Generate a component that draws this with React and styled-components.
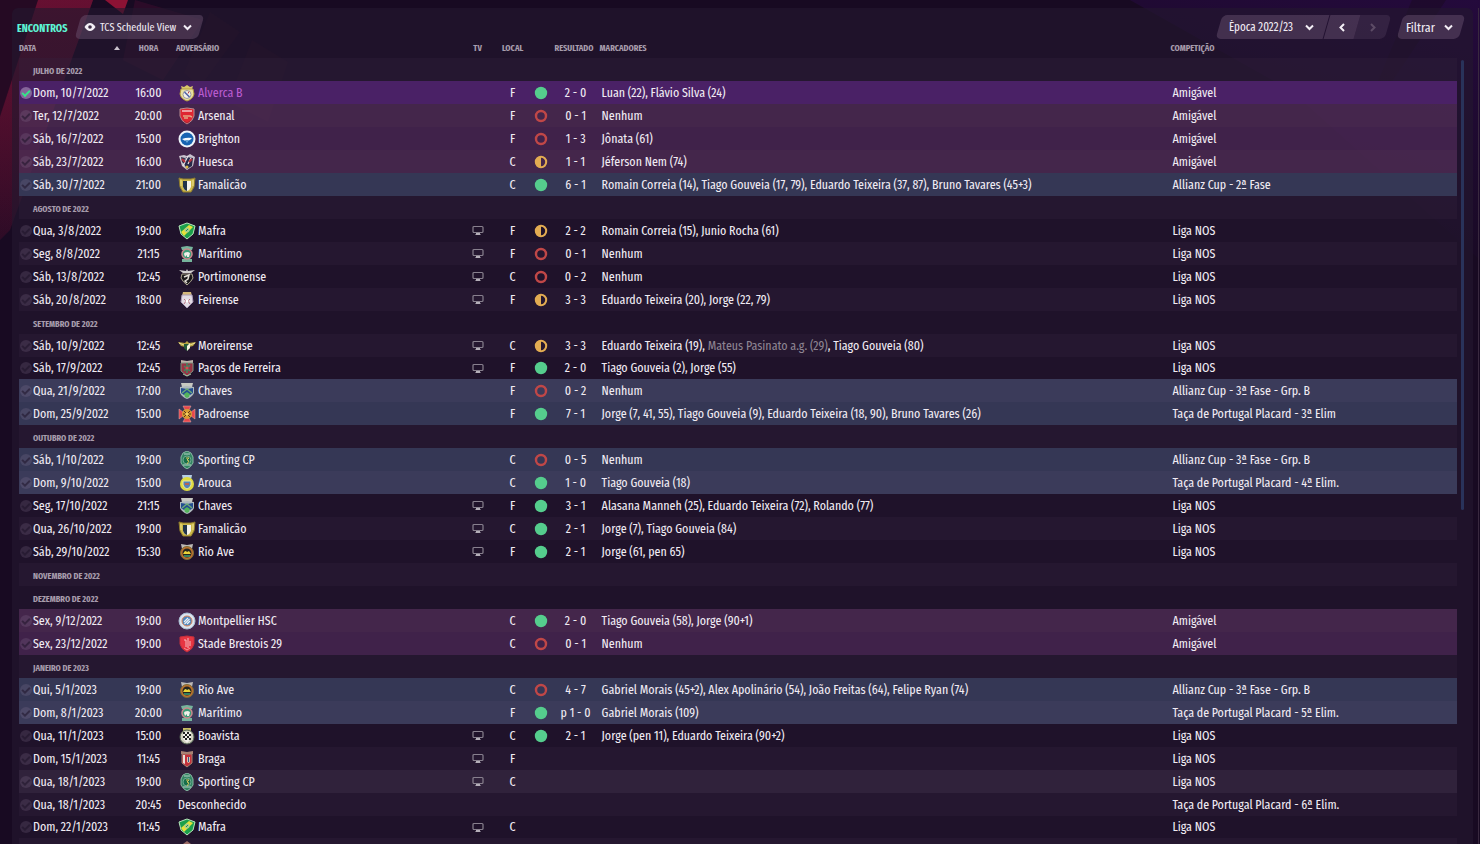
import React, {useState} from "react";
import styled, {createGlobalStyle, css} from "styled-components";

const GlobalStyle = createGlobalStyle`
  *, *::before { box-sizing: border-box; }
  body {
    margin: 0;
    background: #180a22;
    color: #f0ebf3;
    font-family: "Fira Sans Extra Condensed", "Fira Sans Condensed", "Roboto Condensed", "Open Sans Condensed", "Liberation Sans Narrow", "Noto Sans", sans-serif;
    font-size: 13px;
    overflow: hidden;
  }
  button, select, input { font: inherit; color: inherit; margin: 0; }
`;

const Page = styled.div`
  position: relative;
  height: 100vh;
  overflow: hidden;
  padding: 8px 7px 0 12px;
`;

const Backdrop = styled.svg`
  position: absolute;
  top: 0;
  left: 0;
  width: 100%;
  height: 100%;
`;

const Panel = styled.main`
  position: relative;
  height: 100%;
  border-radius: 6px 6px 0 0;
  background: rgba(36, 25, 46, 0.62);
`;

const Toolbar = styled.header`
  display: flex;
  align-items: center;
  height: 32px;
  padding: 7px 11px 1px 5px;
`;

const Title = styled.h1`
  margin: 0;
  padding-top: 3px;
  width: 61px;
  font-size: 11px;
  font-weight: 700;
  color: #5df5d5;
  white-space: nowrap;
`;

const Spacer = styled.div`
  flex: 1;
`;

const FilterGap = styled.div`
  width: 12px;
`;

const slanted = css`
  position: relative;
  z-index: 0;
  display: flex;
  align-items: center;
  height: 24px;
  &::before {
    content: "";
    position: absolute;
    inset: 0;
    z-index: -1;
    transform: skewX(-16deg);
    background: rgba(115, 90, 122, ${p => p.$dim ? 0.22 : 0.42});
    border-radius: ${p => p.$radius || "5px"};
  }
`;

const SlantButton = styled.button`
  ${slanted}
  justify-content: ${p => p.$center ? "center" : "space-between"};
  width: ${p => p.$width}px;
  padding: ${p => p.$center ? "0" : "0 8px 0 6px"};
  border: 0;
  background: none;
  font-size: ${p => p.$size || 12}px;
  white-space: nowrap;
`;

const ButtonLabel = styled.span`
  display: flex;
  align-items: center;
  gap: 4px;
`;

const SeasonBox = styled.div`
  ${slanted}
  width: 107px;
  margin-right: 1px;
  svg {
    position: absolute;
    right: 11px;
    pointer-events: none;
  }
`;

const SeasonSelect = styled.select`
  appearance: none;
  width: 100%;
  height: 100%;
  padding: 0 24px 0 10px;
  border: 0;
  background: none;
  font-size: 12px;
`;

const Content = styled.div`
  display: flex;
  padding: 0 9px 0 7px;
  gap: 4px;
`;

const Table = styled.table`
  flex: 1;
  width: 100%;
  table-layout: fixed;
  border-collapse: separate;
  border-spacing: 0;
`;

const Col = styled.col`
  width: ${p => p.$width};
`;

const Head = styled.th`
  height: 18px;
  padding: 0 0 2px ${p => p.$pad || 0}px;
  text-align: ${p => p.$center ? "center" : "left"};
  font-size: 9px;
  font-weight: 700;
  line-height: 16px;
  color: #a79cac;
  white-space: nowrap;
`;

const SortHead = styled.div`
  display: flex;
  align-items: center;
  justify-content: space-between;
  padding-right: 5px;
`;

const tints = {
    selected: ["#4a2166", "#4a2166"],
    friendly: ["rgba(91, 48, 99, 0.56)", "rgba(98, 56, 102, 0.56)"],
    cup: ["#353755", "#3b3b5a"],
    hover: ["#30223b", "#30223b"]
};

const Row = styled.tr`
  height: ${p => p.$short ? 22 : 23}px;
  background: ${p => p.$kind ? tints[p.$kind][0] : "transparent"};
  &:nth-child(odd) {
    background: ${p => p.$kind ? tints[p.$kind][1] : "rgba(53, 37, 63, 0.3)"};
  }
  && { border-radius: ${p => p.$kind && p.$kind !== "hover" ? 0 : 4}px; }
`;

const Cell = styled.td`
  padding: 0 0 0 ${p => p.$pad || 0}px;
  text-align: ${p => p.$center ? "center" : "left"};
  line-height: 20px;
  white-space: nowrap;
  overflow: hidden;
  svg { display: block; }
`;

const MonthCell = styled.th`
  padding: 2px 0 0 14px;
  text-align: left;
  font-size: 9px;
  font-weight: 700;
  line-height: 18px;
  color: #a79cac;
`;

const Inline = styled.div`
  display: flex;
  align-items: center;
  gap: ${p => p.$gap}px;
`;

const Centered = styled.div`
  display: flex;
  justify-content: center;
`;

const Tick = styled.input`
  appearance: none;
  flex: none;
  position: relative;
  width: 12px;
  height: 12px;
  border-radius: 50%;
  background: rgba(150, 130, 160, 0.2);
  &::before {
    content: "";
    position: absolute;
    left: 2px;
    top: 3px;
    width: 8px;
    height: 5px;
    border: solid rgba(30, 18, 40, 0.55);
    border-width: 0 0 2px 2px;
    transform: rotate(-45deg);
  }
  &:checked { background: #85659a; }
  &:checked::before { border-color: #35e58a; }
`;

const Name = styled.span`
  color: ${p => p.$selected ? "#b95ccf" : "inherit"};
`;

const OwnGoal = styled.span`
  color: #8d8492;
`;

const ScrollTrack = styled.div`
  flex: none;
  width: 3px;
  height: calc(100vh - 48px);
  padding-top: 20px;
`;

const ScrollThumb = styled.div`
  height: 58%;
  border-radius: 2px;
  background: #29325a;
`;

const Chevron = ({dir = "down", color = "#f4eff6"}) => {
    const d = {down: "M2 3.5 5.5 7 9 3.5", left: "M7 2 3.5 5.5 7 9", right: "M4 2 7.5 5.5 4 9"};
    return (
        <svg width="11" height="11" viewBox="0 0 11 11" fill="none" stroke={color} strokeWidth="2">
            <path d={d[dir]}/>
        </svg>
    );
};

const Eye = () => (
    <svg width="12" height="12" viewBox="0 0 12 12">
        <path d="M.5 6Q3 2 6 2t5.500 4Q9 10 6 10T.5 6Z" fill="#f4eff6"/>
        <circle cx="6" cy="6" r="1.800" fill="#3b2b44"/>
    </svg>
);

const Tv = () => (
    <svg width="12" height="11" viewBox="0 0 12 11" fill="none">
        <rect x="1" y="1.500" width="10" height="6" rx="1" stroke="#88808e" strokeWidth="1.200"/>
        <path d="M3.500 9.500h5M4 8.500h4" stroke="#b5afb9"/>
    </svg>
);

const Outcome = ({type}) => (
    <svg width="14" height="14" viewBox="0 0 14 14">
        {type === "W" && <circle cx="7" cy="7" r="6.200" fill="#55cd8d"/>}
        {type === "L" && <circle cx="7" cy="7" r="5" fill="none" stroke="#c04747" strokeWidth="2.400"/>}
        {type === "D" && (
            <>
                <circle cx="7" cy="7" r="5.200" fill="none" stroke="#e3ac52" strokeWidth="2"/>
                <path d="M7 1.500a5.500 5.500 0 0 0 0 11Z" fill="#e3ac52"/>
            </>
        )}
    </svg>
);

const shield = "M2 2 9 1l7 1v7q-1 5-7 8-6-3-7-8Z";

const crests = {
    alverca: (
        <>
            <path d="M4 5 3 2l3 1 3-2 3 2 3-1-1 3Z" fill="#d9c66a"/>
            <path d="M3 5h12l1 5q-1 5-7 7-6-2-7-7Z" fill="#e9dfa0" stroke="#b39c3e"/>
            <circle cx="9" cy="10.500" r="4" fill="#f4f1ea" stroke="#9a9ba2"/>
            <path d="m6.500 8 5 5" stroke="#4d62a5" strokeWidth="1.500"/>
            <path d="m11 7.500-1 2" stroke="#c84343"/>
        </>
    ),
    arsenal: (
        <>
            <path d={shield} fill="#df2631" stroke="#b58a90"/>
            <path d="M4 4h10" stroke="#f5c6c7" strokeWidth="1.500"/>
            <path d="M5 9h7l2 1M6 11h4" stroke="#e4a580" strokeWidth="1.500"/>
            <path d="m6 14 3 2 3-2" stroke="#a62735"/>
        </>
    ),
    brighton: (
        <>
            <circle cx="9" cy="9" r="8.500" fill="#eef4fb"/>
            <circle cx="9" cy="9" r="6.500" fill="#1763b2"/>
            <path d="M4 9q5-2 10-1-2 3-5 3Q6 11 4 9Z" fill="#f4f8fd"/>
            <path d="M7 10h4l-2 3Z" fill="#68a4d7"/>
        </>
    ),
    huesca: (
        <>
            <path d="m1 3 5-1 3 1 3-2 5 3-2 9-6 4-5-4Z" fill="#c9c2cd"/>
            <path d="m8 4 7 1-1 8-5 3-3-5Z" fill="#27294a"/>
            <path d="m3 4 4 1-1 6-2-2Z" fill="#30304c"/>
            <path d="m10 3-5 10M13 5l-3 6" stroke="#e8e2e6" strokeWidth="1.200"/>
            <path d="m4 6 3 3m4 0 3-3" stroke="#b5303e" strokeWidth="2"/>
            <circle cx="9" cy="14" r="1.500" fill="#d9b848"/>
        </>
    ),
    famalicao: (
        <>
            <path d="m1 2 4 1h8l4-1-1 9-3 5H5l-3-5Z" fill="#cbb84a" stroke="#8f7c2d"/>
            <path d="M5 5h8v6q-1 3-4 4-3-1-4-4Z" fill="#f5f4ed"/>
            <path d="M5 5h4v10q-3-1-4-4Z" fill="#20344a"/>
            <path d="M3 4v6M15 4v6" stroke="#ede38a"/>
        </>
    ),
    mafra: (
        <>
            <path d="m1 4 8-3 8 3-2 8-6 5-6-5Z" fill="#1ba04c" stroke="#b9e6bc"/>
            <path d="m3 10 8-7 4 2-9 9Z" fill="#e6e13a"/>
            <circle cx="9" cy="8" r="2.500" fill="#a7cf8c"/>
            <path d="m8 9 2-2" stroke="#298754"/>
        </>
    ),
    maritimo: (
        <>
            <path d="m3 2 6-1 6 1-1 3H4ZM4 14h10v3H4Z" fill="#76b49c"/>
            <circle cx="9" cy="9" r="5" fill="#3c9d78" stroke="#c98a8c" strokeWidth="1.500"/>
            <path d="M6 9q0-2 4-2l2 1-1 4H9v-2l-2 2Z" fill="#f0efe8"/>
        </>
    ),
    portimonense: (
        <>
            <path d="m1 2 7 1 1-2 1 2 7-1-4 3H5Z" fill="#d3d1d2"/>
            <path d="M4 6h10l1 4q-2 4-6 7-4-3-6-7Z" fill="#191719" stroke="#aca58f"/>
            <path d="m6 9 5-2-1 4-3 2 2 2" stroke="#e4dfd8" strokeWidth="1.500" fill="none"/>
        </>
    ),
    feirense: (
        <>
            <path d="M5 1h8l1 4H4Z" fill="#d3b77a"/>
            <path d="M4 4h10l1 7-6 6-6-6Z" fill="#e2dbe4" stroke="#a99bb8"/>
            <path d="m6 8 2 2-2 3m6-5-2 2 2 3" stroke="#b67080" fill="none"/>
            <circle cx="9" cy="10" r="1.500" fill="#fff"/>
        </>
    ),
    moreirense: (
        <>
            <path d="m0 5 7 1 2-2 2 2 7-1-3 4-4 1-2 3-2-3-4-1Z" fill="#b5a342"/>
            <path d="M6 7h6v4l-3 3-3-3Z" fill="#255a37"/>
            <path d="m9 9 3-3v5l-3 3Z" fill="#f4f2df"/>
            <path d="m1 6 5 2m11-2-5 2" stroke="#e9dc93"/>
        </>
    ),
    pacos: (
        <>
            <path d="m3 1 6 1 6-1v3H3Z" fill="#bdb1a7"/>
            <path d="M3 4h12v8l-6 5-6-5Z" fill="#9b3344" stroke="#7a8f7e"/>
            <path d="m6 7 6 5M12 6l-6 6M9 4v10" stroke="#3c8a61" strokeWidth="1.500"/>
            <circle cx="9" cy="9" r="1.500" fill="#d54b4f"/>
            <path d="m5 15 4 2 4-2" stroke="#a9c3a4" fill="none"/>
        </>
    ),
    chaves: (
        <>
            <path d="m3 1 12 0-1 4H4Z" fill="#c8c9c2"/>
            <path d="m2 5 7-1 7 1v6q-2 4-7 6-5-2-7-6Z" fill="#aeb9bd"/>
            <path d="m3 6 6 1 6-1v5l-3 2H6l-3-2Z" fill="#234d91"/>
            <path d="m6 12 3-2 3 2-1 3-2 1-2-1Z" fill="#54b35c"/>
            <path d="m4 11 5-4 5 4" stroke="#6ca877" strokeWidth="1.500" fill="none"/>
        </>
    ),
    padroense: (
        <>
            <path d="M5 1h8l-2 4h-4ZM5 17h8l-2-4h-4ZM1 4v10l4-3V7ZM17 4v10l-4-3V7Z" fill="#e5484c" stroke="#e6a9ab" strokeWidth=".5"/>
            <circle cx="9" cy="9" r="5" fill="#d79b30"/>
            <path d="M5 9h2m1 0h2m1 0h2M6 6l6 6M12 6l-6 6" stroke="#54321d"/>
            <circle cx="9" cy="9" r="1.500" fill="#f0ce62"/>
        </>
    ),
    sporting: (
        <>
            <path d="m5 2 4-2 4 2 2 4 0 6q-2 4-6 6-4-2-6-6V6Z" fill="#328562" stroke="#89b8a4"/>
            <circle cx="9" cy="9" r="4" fill="#176f4c" stroke="#6fa890"/>
            <path d="M8 7h3L9 9l2 1-2 3" stroke="#d4c75b" fill="none"/>
            <path d="M6 3h6M5 14h8" stroke="#b8d2c7"/>
        </>
    ),
    arouca: (
        <>
            <path d="M4 1h10l-1 5H5Z" fill="#b5cfe5"/>
            <circle cx="9" cy="10" r="7" fill="#dedb40"/>
            <path d="M5 7h8v4q-1 3-4 4-3-1-4-4Z" fill="#5383b8" stroke="#ece9a0"/>
            <path d="M7 10h4" stroke="#b66454" strokeWidth="2"/>
        </>
    ),
    rioave: (
        <>
            <path d="m3 1 6 1 6-1-1 5H4Z" fill="#bdb9b5"/>
            <circle cx="9" cy="10" r="6.500" fill="#bd722e" stroke="#7b6a37"/>
            <circle cx="9" cy="10" r="4.500" fill="#24251f"/>
            <path d="M5 11q2-5 4-2l2-1 2 3Z" fill="#ead338"/>
            <path d="M6 13h6" stroke="#3c9f76" strokeWidth="1.500"/>
        </>
    ),
    montpellier: (
        <>
            <circle cx="9" cy="9" r="8" fill="#dce4ed" stroke="#a9bfd5"/>
            <circle cx="9" cy="9" r="5" fill="#4c86bd" stroke="#d98459"/>
            <path d="m6 10 4-4M6.500 12l5-5M9 12l3-3" stroke="#edf2f5" strokeWidth="1.200"/>
        </>
    ),
    brest: (
        <>
            <path d={shield} fill="#e73542" stroke="#c2303c"/>
            <path d="M6 5h2v7M10 3v10M12 6v5" stroke="#f6bdc0" fill="none"/>
            <path d="m6 13 3 2 3-2" stroke="#fa8c91" fill="none"/>
        </>
    ),
    boavista: (
        <>
            <path d="M5 1h8v4H5Z" fill="#c8bc64"/>
            <circle cx="9" cy="10" r="7" fill="#cfd0bd" stroke="#536453"/>
            <path d="M5 5h8v7l-4 4-4-4Z" fill="#f2f1ea"/>
            <path d="M5 5h2v2H5Zm4 0h2v2H9ZM7 7h2v2H7Zm4 0h2v2h-2ZM5 9h2v2H5Zm4 0h2v2H9Zm-2 2h2v2H7Zm4 0h2v2h-2Z" fill="#202321"/>
        </>
    ),
    braga: (
        <>
            <path d="m3 1 6 1 6-1v3H3Z" fill="#a98273"/>
            <path d="M4 4h10v9l-5 4-5-4Z" fill="#c3303a" stroke="#a38270"/>
            <path d="M5 5h2v9l-2-1Z" fill="#e9e2d9"/>
            <path d="M9 7h3v5l-1.500 1L9 12Z" fill="#dcc5a8"/>
            <path d="M10.500 7v5" stroke="#3d5290"/>
        </>
    ),
    next: (
        <path d="m5 3 4-3 4 3 2 3v6l-6 5-6-5V6Z" fill="#9b6b65"/>
    )
};

const Crest = ({id}) => (
    <svg width="18" height="18" viewBox="0 0 18 18" fill="none">{crests[id]}</svg>
);

const F = "friendly";
const CUP = "cup";
const LIGA = "Liga NOS";

// date, time, crest, opponent, tv, venue, outcome, score, scorers, competition, row kind
const months = [
    ["JULHO DE 2022", [
        ["Dom, 10/7/2022", "16:00", "alverca", "Alverca B", 0, "F", "W", "2 - 0", "Luan (22), Flávio Silva (24)", "Amigável", "selected"],
        ["Ter, 12/7/2022", "20:00", "arsenal", "Arsenal", 0, "F", "L", "0 - 1", "Nenhum", "Amigável", F],
        ["Sáb, 16/7/2022", "15:00", "brighton", "Brighton", 0, "F", "L", "1 - 3", "Jônata (61)", "Amigável", F],
        ["Sáb, 23/7/2022", "16:00", "huesca", "Huesca", 0, "C", "D", "1 - 1", "Jéferson Nem (74)", "Amigável", F],
        ["Sáb, 30/7/2022", "21:00", "famalicao", "Famalicão", 0, "C", "W", "6 - 1", "Romain Correia (14), Tiago Gouveia (17, 79), Eduardo Teixeira (37, 87), Bruno Tavares (45+3)", "Allianz Cup - 2ª Fase", CUP]
    ]],
    ["AGOSTO DE 2022", [
        ["Qua, 3/8/2022", "19:00", "mafra", "Mafra", 1, "F", "D", "2 - 2", "Romain Correia (15), Junio Rocha (61)", LIGA],
        ["Seg, 8/8/2022", "21:15", "maritimo", "Marítimo", 1, "F", "L", "0 - 1", "Nenhum", LIGA],
        ["Sáb, 13/8/2022", "12:45", "portimonense", "Portimonense", 1, "C", "L", "0 - 2", "Nenhum", LIGA],
        ["Sáb, 20/8/2022", "18:00", "feirense", "Feirense", 1, "F", "D", "3 - 3", "Eduardo Teixeira (20), Jorge (22, 79)", LIGA]
    ]],
    ["SETEMBRO DE 2022", [
        ["Sáb, 10/9/2022", "12:45", "moreirense", "Moreirense", 1, "C", "D", "3 - 3", <>Eduardo Teixeira (19), <OwnGoal>Mateus Pasinato a.g. (29)</OwnGoal>, Tiago Gouveia (80)</>, LIGA],
        ["Sáb, 17/9/2022", "12:45", "pacos", "Paços de Ferreira", 1, "F", "W", "2 - 0", "Tiago Gouveia (2), Jorge (55)", LIGA, null, true],
        ["Qua, 21/9/2022", "17:00", "chaves", "Chaves", 0, "F", "L", "0 - 2", "Nenhum", "Allianz Cup - 3ª Fase - Grp. B", CUP],
        ["Dom, 25/9/2022", "15:00", "padroense", "Padroense", 0, "F", "W", "7 - 1", "Jorge (7, 41, 55), Tiago Gouveia (9), Eduardo Teixeira (18, 90), Bruno Tavares (26)", "Taça de Portugal Placard - 3ª Elim", CUP]
    ]],
    ["OUTUBRO DE 2022", [
        ["Sáb, 1/10/2022", "19:00", "sporting", "Sporting CP", 0, "C", "L", "0 - 5", "Nenhum", "Allianz Cup - 3ª Fase - Grp. B", CUP],
        ["Dom, 9/10/2022", "15:00", "arouca", "Arouca", 0, "C", "W", "1 - 0", "Tiago Gouveia (18)", "Taça de Portugal Placard - 4ª Elim.", CUP],
        ["Seg, 17/10/2022", "21:15", "chaves", "Chaves", 1, "F", "W", "3 - 1", "Alasana Manneh (25), Eduardo Teixeira (72), Rolando (77)", LIGA],
        ["Qua, 26/10/2022", "19:00", "famalicao", "Famalicão", 1, "C", "W", "2 - 1", "Jorge (7), Tiago Gouveia (84)", LIGA],
        ["Sáb, 29/10/2022", "15:30", "rioave", "Rio Ave", 1, "F", "W", "2 - 1", "Jorge (61, pen 65)", LIGA]
    ]],
    ["NOVEMBRO DE 2022", []],
    ["DEZEMBRO DE 2022", [
        ["Sex, 9/12/2022", "19:00", "montpellier", "Montpellier HSC", 0, "C", "W", "2 - 0", "Tiago Gouveia (58), Jorge (90+1)", "Amigável", F],
        ["Sex, 23/12/2022", "19:00", "brest", "Stade Brestois 29", 0, "C", "L", "0 - 1", "Nenhum", "Amigável", F]
    ]],
    ["JANEIRO DE 2023", [
        ["Qui, 5/1/2023", "19:00", "rioave", "Rio Ave", 0, "C", "L", "4 - 7", "Gabriel Morais (45+2), Alex Apolinário (54), João Freitas (64), Felipe Ryan (74)", "Allianz Cup - 3ª Fase - Grp. B", CUP],
        ["Dom, 8/1/2023", "20:00", "maritimo", "Marítimo", 0, "F", "W", "p 1 - 0", "Gabriel Morais (109)", "Taça de Portugal Placard - 5ª Elim.", CUP],
        ["Qua, 11/1/2023", "15:00", "boavista", "Boavista", 1, "C", "W", "2 - 1", "Jorge (pen 11), Eduardo Teixeira (90+2)", LIGA],
        ["Dom, 15/1/2023", "11:45", "braga", "Braga", 1, "F", null, "", "", LIGA],
        ["Qua, 18/1/2023", "19:00", "sporting", "Sporting CP", 1, "C", null, "", "", LIGA, "hover"],
        ["Qua, 18/1/2023", "20:45", null, "Desconhecido", 0, "", null, "", "", "Taça de Portugal Placard - 6ª Elim."],
        ["Dom, 22/1/2023", "11:45", "mafra", "Mafra", 1, "C", null, "", "", LIGA, null, true],
        ["", "", "next", "", 0, "", null, "", "", ""]
    ]]
];

const Match = ({match, checked, onToggle}) => {
    const [date, time, crest, opponent, tv, venue, outcome, score, scorers, competition, kind, short] = match;
    return (
        <Row $kind={kind} $short={short}>
            <Cell $pad={1}>
                <Inline $gap={1}>
                    <Tick type="checkbox" aria-label={date + " " + opponent} checked={checked} onChange={onToggle}/>
                    {date}
                </Inline>
            </Cell>
            <Cell $center>{time}</Cell>
            <Cell $pad={6}>
                <Inline $gap={2}>
                    {crest && <Crest id={crest}/>}
                    <Name $selected={kind === "selected"}>{opponent}</Name>
                </Inline>
            </Cell>
            <Cell><Centered>{tv ? <Tv/> : null}</Centered></Cell>
            <Cell $center>{venue}</Cell>
            <Cell><Centered>{outcome && <Outcome type={outcome}/>}</Centered></Cell>
            <Cell $center>{score}</Cell>
            <Cell $pad={2}>{scorers}</Cell>
            <Cell $pad={3}>{competition}</Cell>
        </Row>
    );
};

const Background = () => (
    <Backdrop viewBox="0 0 1480 844" preserveAspectRatio="none">
        <defs>
            <linearGradient id="red" x1="0" y1="0" x2="0" y2="1">
                <stop offset="0" stopColor="#6a1032" stopOpacity=".9"/>
                <stop offset="1" stopColor="#6a1032" stopOpacity="0"/>
            </linearGradient>
            <linearGradient id="violet" x1="1" y1="0" x2=".6" y2="1">
                <stop offset="0" stopColor="#240a3c"/>
                <stop offset="1" stopColor="#240a3c" stopOpacity="0"/>
            </linearGradient>
        </defs>
        <path d="M1130 0h350v260L1290 90Z" fill="url(#violet)"/>
        <path d="M38 0h55L10 230-60 300Z" fill="url(#red)"/>
        <path d="M38 0h55L10 230-60 300Z" fill="url(#red)" opacity=".5"/>
        <path d="M0 0h38L-40 240Z" fill="#3a0a26" opacity=".4"/>
        <path d="M105 0h23l-5 14Z" fill="#8c1234"/>
        <path d="m135 0 68 20-40 60-40-20Z" fill="#5a1238" opacity=".3"/>
        <path d="m210 12 30 20-40 55-16-14ZM252 40l36 22-20 60-40-20Z" fill="#5a1238" opacity=".15"/>
        <path d="M1412 0h34l-66 100h-10Z" fill="#190a20" opacity=".5"/>
        <path d="M1478.500 8v836" stroke="#39293f"/>
    </Backdrop>
);

const App = () => {
    const [ticked, setTicked] = useState({"0-0": true});
    const toggle = key => setTicked({...ticked, [key]: !ticked[key]});

    return (
        <>
            <GlobalStyle/>
            <Page>
                <Background/>
                <Panel>
                    <Toolbar>
                        <Title>ENCONTROS</Title>
                        <SlantButton $width={123} $size={11}>
                            <ButtonLabel><Eye/>TCS Schedule View</ButtonLabel>
                            <Chevron/>
                        </SlantButton>
                        <Spacer/>
                        <SeasonBox $radius="5px 0 0 5px">
                            <SeasonSelect aria-label="Época">
                                <option>Época 2022/23</option>
                            </SeasonSelect>
                            <Chevron/>
                        </SeasonBox>
                        <SlantButton $width={30} $center $radius="0" aria-label="Anterior"><Chevron dir="left"/></SlantButton>
                        <SlantButton $width={31} $center $dim $radius="0 5px 5px 0" disabled aria-label="Seguinte">
                            <Chevron dir="right" color="#5d4c66"/>
                        </SlantButton>
                        <FilterGap/>
                        <SlantButton $width={62} $size={13}>Filtrar<Chevron/></SlantButton>
                    </Toolbar>
                    <Content>
                        <Table>
                            <colgroup>
                                <Col $width="106px"/>
                                <Col $width="47px"/>
                                <Col $width="20%"/>
                                <Col $width="36px"/>
                                <Col $width="34px"/>
                                <Col $width="22px"/>
                                <Col $width="48px"/>
                                <Col/>
                                <Col $width="20%"/>
                            </colgroup>
                            <thead>
                                <tr>
                                    <Head>
                                        <SortHead>
                                            DATA
                                            <svg width="6" height="4" viewBox="0 0 6 4"><path d="M0 4 3 0l3 4Z" fill="#c9c2cd"/></svg>
                                        </SortHead>
                                    </Head>
                                    <Head $center>HORA</Head>
                                    <Head $pad={4}>ADVERSÁRIO</Head>
                                    <Head $center>TV</Head>
                                    <Head $center>LOCAL</Head>
                                    <Head/>
                                    <Head $pad={3}>RESULTADO</Head>
                                    <Head>MARCADORES</Head>
                                    <Head $pad={1}>COMPETIÇÃO</Head>
                                </tr>
                            </thead>
                            <tbody>
                                {months.map(([title, matches], m) => (
                                    <React.Fragment key={title}>
                                        <Row><MonthCell colSpan={9}>{title}</MonthCell></Row>
                                        {matches.map((match, i) => (
                                            <Match key={i} match={match} checked={!!ticked[m + "-" + i]}
                                                   onToggle={() => toggle(m + "-" + i)}/>
                                        ))}
                                    </React.Fragment>
                                ))}
                            </tbody>
                        </Table>
                        <ScrollTrack><ScrollThumb/></ScrollTrack>
                    </Content>
                </Panel>
            </Page>
        </>
    );
};

export default App;
